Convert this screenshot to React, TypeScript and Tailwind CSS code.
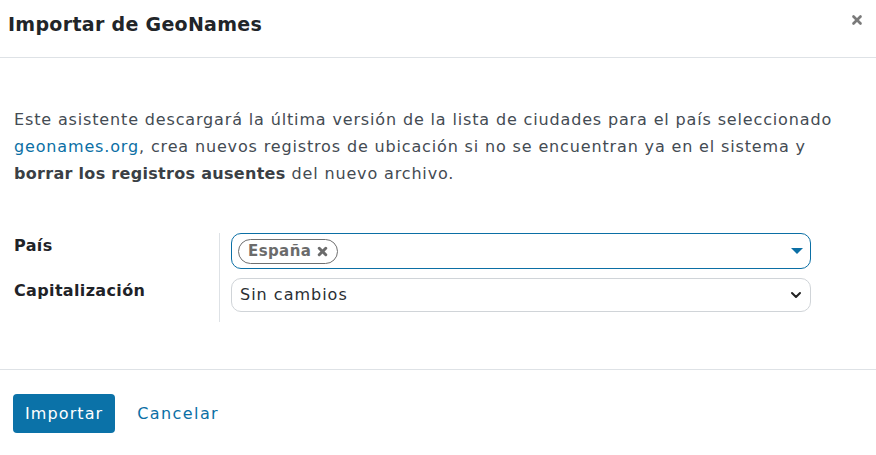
import React from 'react';
import { ChevronDown, X } from 'lucide-react';

const font = { fontFamily: '"DejaVu Sans", "Liberation Sans", sans-serif' };

export default function App() {
  return (
    <div className="w-[876px] h-[455px] bg-white text-[#444b53] flex flex-col" style={font}>
      <div className="h-[58px] border-b border-[#dee2e6] flex items-center justify-between pl-2 pr-3">
        <h1 className="text-[19px] font-semibold text-[#212529] tracking-[0.3px] -mt-[8px]">Importar de GeoNames</h1>
        <button className="text-[#7a7a7a] -mt-[18px]">
          <X className="w-[14px] h-[14px]" strokeWidth={4.5} />
        </button>
      </div>

      <div className="px-[14px] pt-[48px] pb-[47px] flex flex-col">
        <p className="text-[16px] leading-[27px] whitespace-nowrap tracking-[0.85px]">
          Este asistente descargará la última versión de la lista de ciudades para el país seleccionado
          <br />
          <a className="text-[#0b6fa5]">geonames.org</a>, crea nuevos registros de ubicación si no se encuentran ya en el sistema y
          <br />
          <b className="font-bold text-[#3a3f45] tracking-[0.3px]">borrar los registros ausentes</b> del nuevo archivo.
        </p>

        <div className="mt-[46px] flex">
          <div className="w-[206px] flex flex-col border-r border-[#dee2e6] gap-[19px] pb-[18px]">
            <label className="text-[16px] font-bold text-[#1f2328] leading-[26px] tracking-[0.35px]">País</label>
            <label className="text-[16px] font-bold text-[#1f2328] leading-[26px] tracking-[0.35px]">Capitalización</label>
          </div>
          <div className="flex-1 pl-[11px] pr-[51px] flex flex-col gap-[9px]">
            <div className="h-[36px] border border-[#0b6fa5] rounded-[10px] flex items-center pl-[6px] pr-[6px]">
              <span className="h-[25px] pl-[9px] pr-[8px] border-[1.5px] border-[#6f6f6f] rounded-full flex items-center gap-[5px] text-[15px] font-bold text-[#6b6b6b] tracking-[0.4px]">
                España
                <X className="w-[13px] h-[13px]" strokeWidth={5.5} />
              </span>
              <span className="ml-auto mr-[1px] w-0 h-0 border-l-[6px] border-r-[6px] border-t-[6px] border-l-transparent border-r-transparent border-t-[#0b6fa5]" />
            </div>
            <div className="h-[34px] border border-[#d0d4d8] rounded-[10px] flex items-center pl-[8px] pr-[6px] text-[16px] text-[#2a2e33] tracking-[1px]">
              Sin cambios
              <ChevronDown className="ml-auto w-[16px] h-[16px] text-[#222]" strokeWidth={3} />
            </div>
          </div>
        </div>
      </div>

      <div className="border-t border-[#dee2e6] px-[13px] pt-[24px] flex items-center gap-[22px]">
        <button className="h-[39px] px-[12px] bg-[#0b72a8] text-white rounded-[4px] text-[16px] tracking-[1.1px]">Importar</button>
        <a className="text-[#0b6fa5] text-[16px] tracking-[1.4px]">Cancelar</a>
      </div>
    </div>
  );
}
